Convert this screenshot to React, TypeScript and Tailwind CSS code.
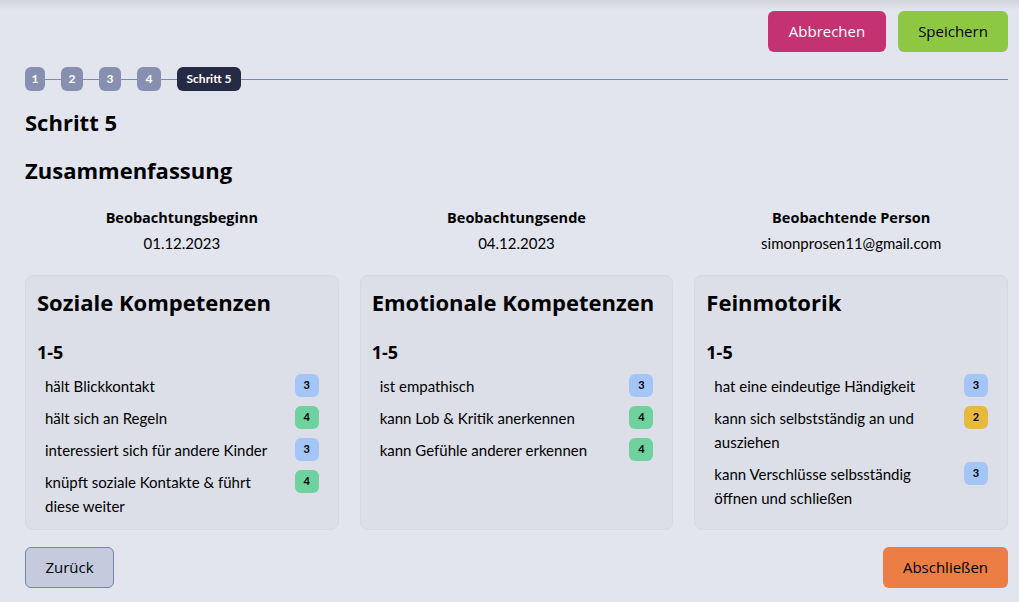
import React from "react";

type Item = { text: string; score: number };

const heading = { fontFamily: "'Open Sans', Lato, sans-serif" };

const Badge = ({ score }: { score: number }) => {
  const cls =
    score === 2 ? "bg-[#e8b93f]" : score === 3 ? "bg-[#a3c6f7]" : "bg-[#6fd19e]";
  return (
    <span
      className={`${cls} flex h-[23px] w-[24px] shrink-0 items-center justify-center rounded-[6px] text-[11px] font-bold text-black`}
    >
      {score}
    </span>
  );
};

const Card = ({ title, items }: { title: string; items: Item[] }) => (
  <div className="h-[255px] rounded-[8px] border border-[#d6d9e3] bg-[#dcdfe8] px-[11px] pt-[10px]">
    <h2 className="text-[22px] leading-[32px] font-bold text-black" style={heading}>
      {title}
    </h2>
    <h3 className="mt-[22px] text-[18px] leading-[24px] font-bold text-black" style={heading}>
      1-5
    </h3>
    <ul className="mt-[10px] flex flex-col gap-[8px] pl-[8px] pr-[8px]">
      {items.map((it) => (
        <li key={it.text} className="flex items-start justify-between gap-3">
          <span className="text-[15px] leading-[24px] text-black">{it.text}</span>
          <Badge score={it.score} />
        </li>
      ))}
    </ul>
  </div>
);

const steps = [
  { n: "1", w: "w-[20px]" },
  { n: "2", w: "w-[22px]" },
  { n: "3", w: "w-[22px]" },
  { n: "4", w: "w-[24px]" },
];

export default function App() {
  return (
    <div
      className="relative h-[602px] w-[1019px] overflow-hidden bg-[#e2e5ee] pl-[25px] pr-[11px] text-black"
      style={{ fontFamily: "Lato, 'Open Sans', sans-serif" }}
    >
      <div className="pointer-events-none absolute inset-x-0 top-0 h-[10px] bg-gradient-to-b from-[#d3d5dc] to-[#e2e5ee]" />
      <div className="relative flex justify-end gap-[12px] pt-[11px]">
        <button className="h-[41px] w-[118px] rounded-[6px] bg-[#c53272] text-[15px] font-medium text-white" style={heading}>
          Abbrechen
        </button>
        <button className="h-[41px] w-[110px] rounded-[6px] bg-[#8ec843] text-[15px] font-medium text-black" style={heading}>
          Speichern
        </button>
      </div>

      <div className="relative mt-[15px] flex h-[24px] items-center">
        <div className="absolute inset-x-0 top-[12px] h-px bg-[#7b89b7]" />
        <div className="relative flex items-center gap-[16px]">
          {steps.map((s) => (
            <span
              key={s.n}
              className={`${s.w} flex h-[24px] items-center justify-center rounded-[6px] bg-[#8790b1] text-[12px] font-bold text-white`}
            >
              {s.n}
            </span>
          ))}
          <span className="flex h-[24px] w-[64px] items-center justify-center rounded-[6px] bg-[#262b45] text-[12px] font-bold text-white">
            Schritt 5
          </span>
        </div>
      </div>

      <h1 className="mt-[17px] text-[22px] leading-[28px] font-bold" style={heading}>
        Schritt 5
      </h1>
      <h2 className="mt-[20px] text-[22px] leading-[28px] font-bold" style={heading}>
        Zusammenfassung
      </h2>

      <div className="mt-[23px] grid grid-cols-3 gap-[21px] text-center">
        <div>
          <div className="text-[14.5px] leading-[22px] font-bold" style={heading}>Beobachtungsbeginn</div>
          <div className="mt-[3px] text-[15px] leading-[22px]">01.12.2023</div>
        </div>
        <div>
          <div className="text-[14.5px] leading-[22px] font-bold" style={heading}>Beobachtungsende</div>
          <div className="mt-[3px] text-[15px] leading-[22px]">04.12.2023</div>
        </div>
        <div>
          <div className="text-[14.5px] leading-[22px] font-bold" style={heading}>Beobachtende Person</div>
          <div className="mt-[3px] text-[15px] leading-[22px]">simonprosen11@gmail.com</div>
        </div>
      </div>

      <div className="mt-[21px] grid grid-cols-3 gap-[21px]">
        <Card
          title="Soziale Kompetenzen"
          items={[
            { text: "hält Blickkontakt", score: 3 },
            { text: "hält sich an Regeln", score: 4 },
            { text: "interessiert sich für andere Kinder", score: 3 },
            { text: "knüpft soziale Kontakte & führt diese weiter", score: 4 },
          ]}
        />
        <Card
          title="Emotionale Kompetenzen"
          items={[
            { text: "ist empathisch", score: 3 },
            { text: "kann Lob & Kritik anerkennen", score: 4 },
            { text: "kann Gefühle anderer erkennen", score: 4 },
          ]}
        />
        <Card
          title="Feinmotorik"
          items={[
            { text: "hat eine eindeutige Händigkeit", score: 3 },
            { text: "kann sich selbstständig an und ausziehen", score: 2 },
            { text: "kann Verschlüsse selbsständig öffnen und schließen", score: 3 },
          ]}
        />
      </div>

      <div className="mt-[17px] flex items-center justify-between">
        <button className="h-[41px] w-[89px] rounded-[6px] border border-[#7984b0] bg-[#c5cadc] text-[15px] font-medium text-black" style={heading}>
          Zurück
        </button>
        <button className="h-[41px] w-[125px] rounded-[6px] bg-[#eb7d45] text-[15px] font-medium text-black" style={heading}>
          Abschließen
        </button>
      </div>
    </div>
  );
}
